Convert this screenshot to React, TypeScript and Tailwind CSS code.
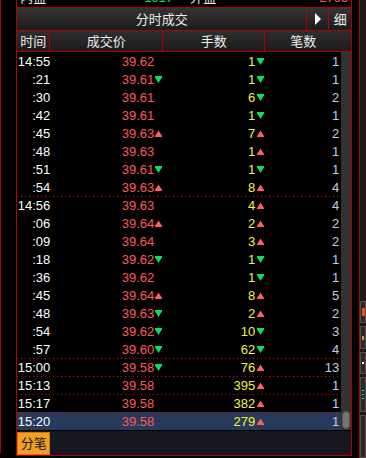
import React from "react";

type Arrow = "u" | "d" | null;
type Row = { t: string; p: string; pa: Arrow; v: string; va: Arrow; c: string; sep?: boolean; sel?: boolean };

const rows: Row[] = [
  { t: "14:55", p: "39.62", pa: null, v: "1", va: "d", c: "1" },
  { t: ":21", p: "39.61", pa: "d", v: "1", va: "d", c: "1" },
  { t: ":30", p: "39.61", pa: null, v: "6", va: "d", c: "2" },
  { t: ":42", p: "39.61", pa: null, v: "1", va: "d", c: "1" },
  { t: ":45", p: "39.63", pa: "u", v: "7", va: "u", c: "2" },
  { t: ":48", p: "39.63", pa: null, v: "1", va: "u", c: "1" },
  { t: ":51", p: "39.61", pa: "d", v: "1", va: "d", c: "1" },
  { t: ":54", p: "39.63", pa: "u", v: "8", va: "u", c: "4" },
  { t: "14:56", p: "39.63", pa: null, v: "4", va: "u", c: "4", sep: true },
  { t: ":06", p: "39.64", pa: "u", v: "2", va: "u", c: "2" },
  { t: ":09", p: "39.64", pa: null, v: "3", va: "u", c: "2" },
  { t: ":18", p: "39.62", pa: "d", v: "1", va: "d", c: "1" },
  { t: ":36", p: "39.62", pa: null, v: "1", va: "d", c: "1" },
  { t: ":45", p: "39.64", pa: "u", v: "8", va: "u", c: "5" },
  { t: ":48", p: "39.63", pa: "d", v: "2", va: "u", c: "2" },
  { t: ":54", p: "39.62", pa: "d", v: "10", va: "d", c: "3" },
  { t: ":57", p: "39.60", pa: "d", v: "62", va: "d", c: "4" },
  { t: "15:00", p: "39.58", pa: "d", v: "76", va: "u", c: "13", sep: true },
  { t: "15:13", p: "39.58", pa: null, v: "395", va: "u", c: "1", sep: true },
  { t: "15:17", p: "39.58", pa: null, v: "382", va: "u", c: "1", sep: true },
  { t: "15:20", p: "39.58", pa: null, v: "279", va: "u", c: "1", sep: true, sel: true },
];

function Tri({ a }: { a: Arrow }) {
  if (!a) return <span className="block w-[7px] h-[7px]" />;
  if (a === "d")
    return (
      <svg width="7" height="7" viewBox="0 0 7 7" className="block">
        <polygon points="0,0 7,0 7,1.2 3.5,7 0,1.2" fill="#00e35a" />
      </svg>
    );
  return (
    <svg width="7" height="7" viewBox="0 0 7 7" className="block">
      <polygon points="3.5,0.5 7,6 7,7 0,7 0,6" fill="#ff5f5f" />
    </svg>
  );
}

function DataRow({ r }: { r: Row }) {
  const base = "flex items-center h-[18px] bg-no-repeat";
  const sepCls = r.sep
    ? " bg-[linear-gradient(to_right,#f00000_1px,transparent_1px)] bg-[length:4px_1px] bg-repeat-x"
    : "";
  const selCls = r.sel ? " bg-[#283a5c]" : "";
  return (
    <div className={base + sepCls + selCls}>
      <div className="w-[33px] text-right text-white">{r.t}</div>
      <div className="w-[113px] flex items-center justify-end">
        <span className="text-[#ff5757]">{r.p}</span>
        <span className="pl-[1px] pr-[1px]">
          <Tri a={r.pa} />
        </span>
      </div>
      <div className="w-[102px] flex items-center justify-end">
        <span className="text-[#f4f43c]">{r.v}</span>
        <span className="pl-[2px] pr-[1px]">
          <Tri a={r.va} />
        </span>
      </div>
      <div className="w-[76px] text-right pr-[2px] text-[#c4cde0]">{r.c}</div>
    </div>
  );
}

export default function App() {
  return (
    <div className="w-[366px] h-[458px] bg-black flex overflow-hidden font-['Liberation_Sans','Noto_Sans_CJK_SC',sans-serif] text-[13px] leading-[15px]">
      <div className="w-px h-[453px] bg-[#b00000]" />
      <div className="w-[16px]" />
      <div className="w-[336px] h-[456px] border-x border-b border-[#b00000] flex flex-col">
        {/* partial top row */}
        <div className="h-[8px] border-b border-[#b00000] overflow-hidden shrink-0">
          <div className="flex items-start mt-[-10px] h-[15px]">
            <span className="w-[33px] pl-[3px] text-[#e6e6e6]">内盘</span>
            <span className="w-[123px] text-right text-[#00e35a]">1917</span>
            <span className="pl-[17px] text-[#e6e6e6]">外盘</span>
            <span className="flex-1 text-right pr-[3px] text-[#ff5757]">2795</span>
          </div>
        </div>
        {/* title bar */}
        <div className="h-[23px] shrink-0 border-b border-[#b00000] flex bg-[linear-gradient(#343434,#1b1b1b)] text-[#eeeeee]">
          <div className="w-[290px] flex items-center justify-center border-r border-[#b00000]">分时成交</div>
          <div className="w-[22px] flex items-center justify-center border-r border-[#b00000]">
            <svg width="6" height="12" viewBox="0 0 6 12" className="block">
              <polygon points="0,0 6,6 0,12" fill="#ffffff" />
            </svg>
          </div>
          <div className="flex-1 flex items-center justify-center">细</div>
        </div>
        {/* column header */}
        <div className="h-[21px] shrink-0 border-b border-[#b00000] flex bg-[linear-gradient(#2e2e2e,#1c1c1c)] text-[#eeeeee]">
          <div className="w-[33px] flex items-center justify-center border-r border-[#b00000]">时间</div>
          <div className="w-[113px] flex items-center justify-center border-r border-[#b00000]">成交价</div>
          <div className="w-[102px] flex items-center justify-center border-r border-[#b00000]">手数</div>
          <div className="flex-1 flex items-center justify-center pr-[10px]">笔数</div>
        </div>
        {/* body */}
        <div className="h-[378px] shrink-0 flex">
          <div className="w-[324px] flex flex-col">
            {rows.map((r, i) => (
              <DataRow key={i} r={r} />
            ))}
          </div>
          <div className="w-[10px] bg-[#323232] flex flex-col justify-end items-center pb-[1px]">
            <div className="w-[8px] h-[18px] rounded-[4px] bg-[#747474] border border-[#555555]" />
          </div>
        </div>
        {/* footer */}
        <div className="flex-1 border-t border-black bg-[#17171f] flex items-start">
          <div className="mt-px w-[33px] h-[23px] bg-[#f0a024] border border-[#c8780e] flex items-center justify-center text-[#1a1a1a] text-[13px]">
            分笔
          </div>
        </div>
      </div>
      <div className="w-[7px]" />
      <div className="w-px h-full bg-[#b00000]" />
      <div className="flex-1 bg-[#1a1a1a] flex flex-col pt-[301px] gap-[3px]">
        <div className="h-[22px] border border-[#505050] bg-[#2a2a2a] flex items-center pl-px">
          <div className="w-[3px] h-[8px] bg-[#e05020]" />
        </div>
        <div className="h-[23px] border border-[#505050] bg-[#2a2a2a] flex items-center pl-px">
          <div className="w-[2px] h-[4px] bg-[#e0a030]" />
        </div>
        <div className="h-[22px] border border-[#505050] bg-[#2a2a2a] flex items-center pl-px">
          <div className="w-[2px] h-[2px] bg-white" />
        </div>
        <div className="h-[35px] border border-[#505050] bg-[#2a2a2a] flex flex-col justify-center gap-[3px] pl-px">
          <div className="w-[2px] h-px bg-[#60a0e0]" />
          <div className="w-[2px] h-px bg-[#60a0e0]" />
          <div className="w-[2px] h-px bg-[#60a0e0]" />
        </div>
        <div className="flex-1 border border-[#505050] bg-[#2a2a2a]" />
      </div>
    </div>
  );
}
